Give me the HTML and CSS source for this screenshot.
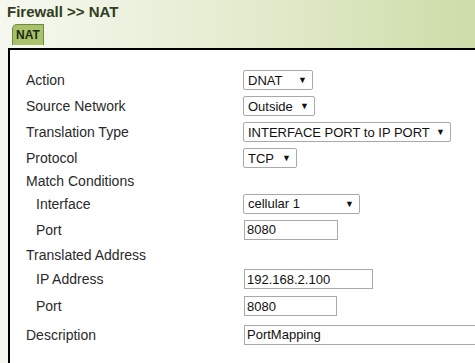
FILE: index.html
```html
<!DOCTYPE html>
<html lang="en">
<head>
  <meta charset="UTF-8">
  <title>Firewall &gt;&gt; NAT</title>
  <link rel="stylesheet" href="styles.css">
</head>
<body>
  <h1 class="page-title">Firewall &gt;&gt; NAT</h1>
  <div class="tabs">
    <span class="tab">NAT</span>
  </div>
  <div class="panel">
    <form class="nat-form">
      <div class="row">
        <label>Action</label>
        <span class="select-wrap w70">
          <select><option>DNAT</option></select>
        </span>
      </div>
      <div class="row">
        <label>Source Network</label>
        <span class="select-wrap w72">
          <select><option>Outside</option></select>
        </span>
      </div>
      <div class="row">
        <label>Translation Type</label>
        <span class="select-wrap w208">
          <select><option>INTERFACE PORT to IP PORT</option></select>
        </span>
      </div>
      <div class="row">
        <label>Protocol</label>
        <span class="select-wrap w54">
          <select><option>TCP</option></select>
        </span>
      </div>
      <div class="row short">
        <label>Match Conditions</label>
      </div>
      <div class="row mid">
        <label class="sub">Interface</label>
        <span class="select-wrap w117">
          <select><option>cellular 1</option></select>
        </span>
      </div>
      <div class="row tall">
        <label class="sub">Port</label>
        <input type="text" class="w94" value="8080">
      </div>
      <div class="row">
        <label>Translated Address</label>
      </div>
      <div class="row">
        <label class="sub">IP Address</label>
        <input type="text" class="w129" value="192.168.2.100">
      </div>
      <div class="row taller">
        <label class="sub">Port</label>
        <input type="text" class="w93" value="8080">
      </div>
      <div class="row tall">
        <label>Description</label>
        <input type="text" class="wide" value="PortMapping">
      </div>
    </form>
  </div>
</body>
</html>
```

FILE: styles.css
```css
html, body {
  height: 100%;
}

body {
  margin: 0;
  display: flex;
  flex-direction: column;
  font-family: "Liberation Sans", Arial, sans-serif;
  background: linear-gradient(to right, #f6f8f0 0%, #e2ebcc 55%, #cddca8 100%);
  overflow: hidden;
}

.page-title {
  margin: 0;
  padding: 3px 0 0 7px;
  height: 18px;
  font-size: 15px;
  font-weight: bold;
  color: #2f3d22;
}

.tabs {
  padding: 3px 0 0 12px;
  height: 24px;
  box-sizing: border-box;
}

.tab {
  display: inline-block;
  width: 32px;
  height: 21px;
  box-sizing: border-box;
  background-color: #a8c26c;
  border: 1px solid #6f8a3c;
  border-bottom: none;
  border-top-left-radius: 5px;
  font-size: 12px;
  font-weight: bold;
  line-height: 21px;
  text-align: center;
  color: #1d2a10;
}

.panel {
  flex: 1;
  min-height: 0;
  overflow: hidden;
  margin: 3px 0 0 8px;
  border-top: 2px solid #000;
  border-left: 2px solid #000;
  background-color: #fff;
  padding: 17px 0 0 16px;
}

.row {
  display: grid;
  grid-template-columns: 217px 1fr;
  align-items: center;
  height: 24px;
  font-size: 14px;
  color: #2a2a2a;
}

.row:nth-child(-n+4) { height: 26px; }
.row.short { height: 20px; }
.row.mid { height: 25px; }
.row.tall { height: 27px; }
.row.taller { height: 30px; }

.row .sub {
  padding-left: 10px;
}

.select-wrap {
  position: relative;
  display: inline-block;
  height: 20px;
}

.select-wrap select {
  -webkit-appearance: none;
  appearance: none;
  width: 100%;
  height: 20px;
  box-sizing: border-box;
  border: 1px solid #a9a9a9;
  border-radius: 2px;
  background: #fff;
  padding: 0 0 0 4px;
  font-family: "Liberation Sans", Arial, sans-serif;
  font-size: 13px;
  color: #111;
}

.select-wrap::after {
  content: "\25BC";
  position: absolute;
  right: 6px;
  top: 5px;
  font-size: 9px;
  color: #111;
  pointer-events: none;
}

input[type="text"] {
  height: 20px;
  box-sizing: border-box;
  margin-left: 1px;
  border: 1px solid #a9a9a9;
  padding: 0 2px;
  font-family: "Liberation Sans", Arial, sans-serif;
  font-size: 13px;
  color: #111;
}

.w54 { width: 54px; }
.w70 { width: 70px; }
.w72 { width: 72px; }
.w117 { width: 117px; }
.w208 { width: 208px; }
.w93 { width: 93px; }
.w94 { width: 94px; }
.w129 { width: 129px; }
.wide { width: 240px; }
```
